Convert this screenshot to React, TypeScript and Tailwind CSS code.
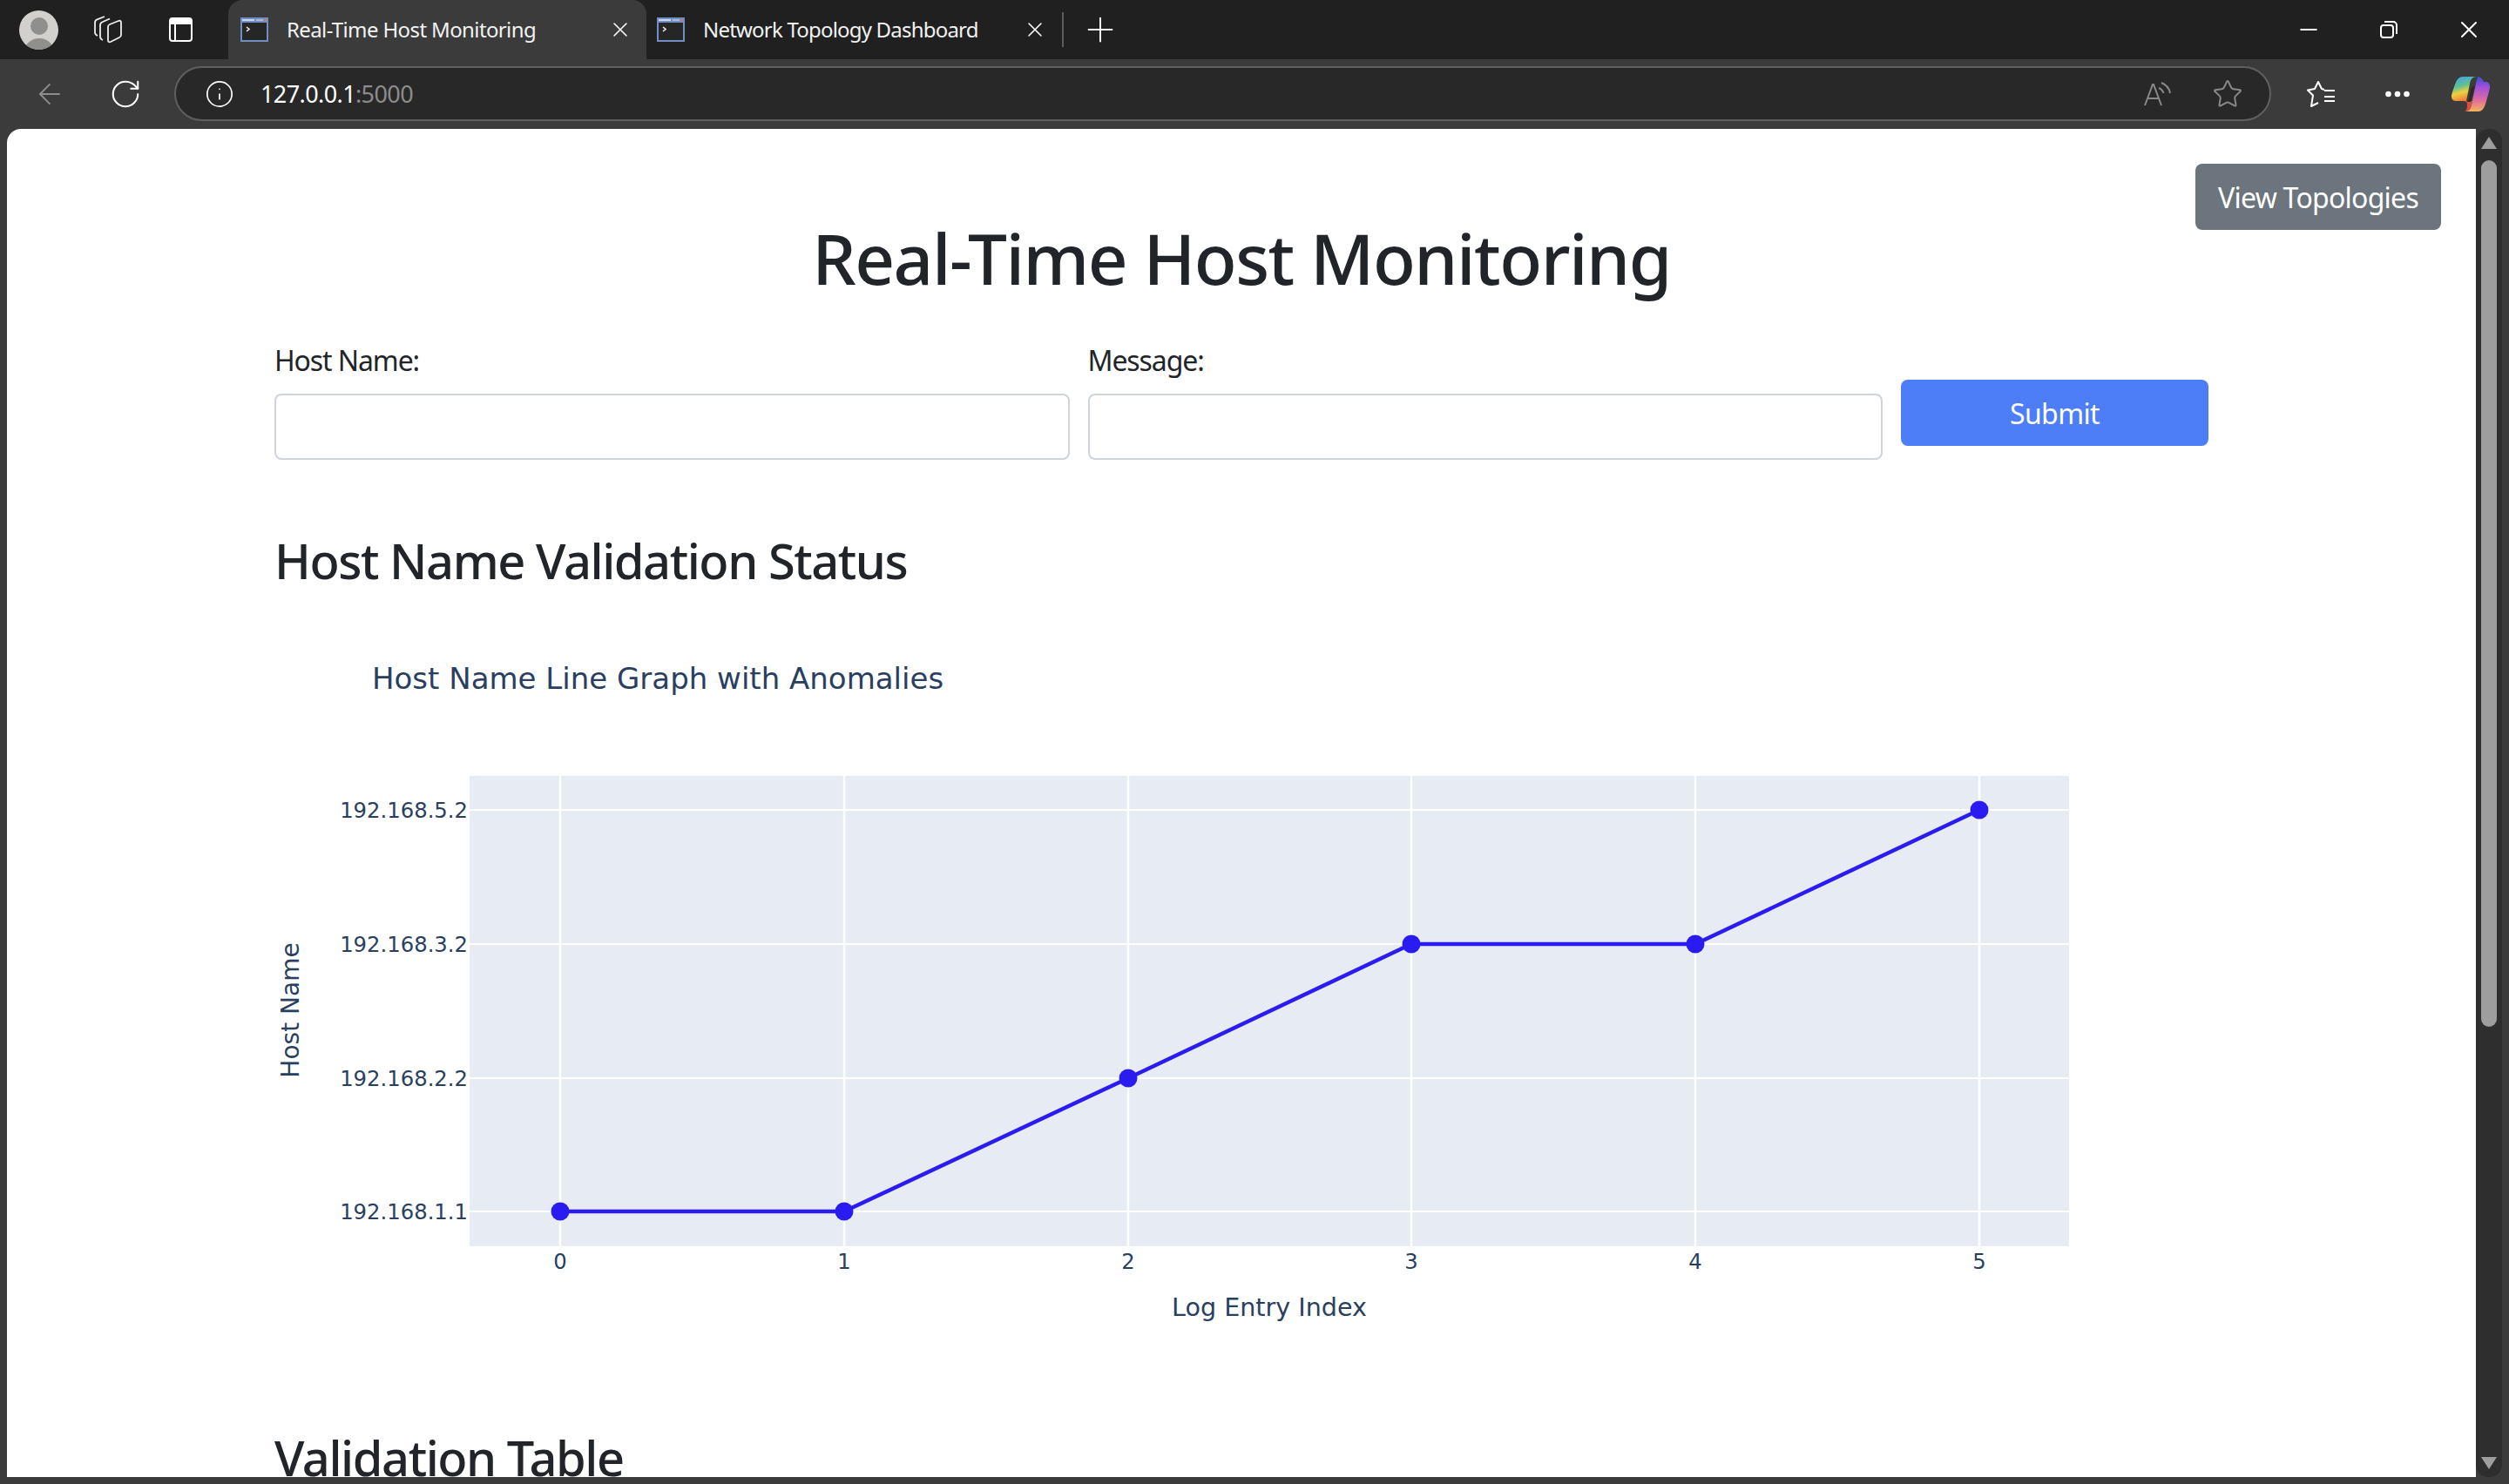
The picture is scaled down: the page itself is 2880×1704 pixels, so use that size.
import { ArrowLeft, Ellipsis, Info, Minus, Plus, RotateCw, Star, X } from "lucide-react";

const xTicks = [
  { label: "0", x: 643 },
  { label: "1", x: 969 },
  { label: "2", x: 1295 },
  { label: "3", x: 1620 },
  { label: "4", x: 1946 },
  { label: "5", x: 2272 },
];

const yTicks = [
  { label: "192.168.5.2", y: 930 },
  { label: "192.168.3.2", y: 1084 },
  { label: "192.168.2.2", y: 1238 },
  { label: "192.168.1.1", y: 1391 },
];

const points = [
  [643, 1391],
  [969, 1391],
  [1295, 1238],
  [1620, 1084],
  [1946, 1084],
  [2272, 930],
];

function Favicon() {
  return (
    <svg width="32" height="28" viewBox="0 0 32 28" className="shrink-0">
      <rect width="32" height="28" fill="#6f8fc4" />
      <rect x="2" y="2" width="14" height="2" fill="#c9d6ee" />
      <rect x="18" y="2" width="8" height="2" fill="#aebbd4" />
      <rect x="27" y="2" width="3" height="2" fill="#e2725b" />
      <rect x="2" y="6" width="28" height="20" fill="#262626" />
      <path d="M7 11l3 2.5-3 2.5" fill="none" stroke="#e8e8e8" strokeWidth="1.6" />
    </svg>
  );
}

function Tab({ title, active }: { title: string; active?: boolean }) {
  return (
    <div
      className={
        active
          ? "flex h-[68px] w-[480px] items-center rounded-t-[16px] bg-[#3b3b3b] pl-[14px] pr-[16px]"
          : "flex h-[68px] w-[477px] items-center pl-[12px] pr-[17px]"
      }
    >
      <Favicon />
      <span
        className={
          active
            ? "ml-[21px] flex-1 text-[24px] tracking-[-0.62px] text-[#f2f2f2]"
            : "ml-[21px] flex-1 text-[24px] tracking-[-0.8px] text-[#f2f2f2]"
        }
      >
        {title}
      </span>
      <X className="size-[28px] text-white" strokeWidth={1.3} />
    </div>
  );
}

function TabsIcon() {
  return (
    <svg width="32" height="32" viewBox="0 0 32 32" fill="none" stroke="#eee" strokeWidth="1.8" strokeLinejoin="round">
      <path d="M16 13c0-1.500.5-2.500 2-3l10-4c2-.7 3 0 3 2v14c0 1.500-.5 2.500-2 3l-10 5c-2 .8-3 0-3-2z" />
      <path d="M10 28c-2-.7-3-2-3-4V11c0-2 1-3 2.500-3.700L18 3.500" />
      <path d="M4 23c-2-1-3-2-3-3.500V8c0-2 1-3 2.500-3.700L12 1" />
    </svg>
  );
}

function ReadAloudIcon() {
  return (
    <svg width="32" height="30" viewBox="0 0 32 30" fill="none" stroke="#8a8a8a" strokeWidth="2">
      <path d="M1 28L10 4h1l9 24M4.500 20h12" />
      <path d="M17 8c3 1 4.500 3 5.500 6M20 2c5 2 9 6 10 12" />
    </svg>
  );
}

function FavoritesIcon() {
  return (
    <svg width="33" height="32" viewBox="0 0 33 32" fill="none" stroke="#fff" strokeWidth="2" strokeLinejoin="round">
      <path d="M20 11l-3-1-4-8-4 8-8 1.500 6 6-2 12.500 8-4" />
      <path d="M20 12h12M20 19h12M20 24h12" />
    </svg>
  );
}

function CopilotLogo() {
  return (
    <svg width="44" height="40" viewBox="0 0 44 40">
      <defs>
        <linearGradient id="copilotLeft" x1="0" y1="0" x2="0.3" y2="1">
          <stop offset="0" stopColor="#3f9bf2" />
          <stop offset="0.45" stopColor="#5fc28f" />
          <stop offset="0.7" stopColor="#ecd23f" />
          <stop offset="1" stopColor="#f0843c" />
        </linearGradient>
        <linearGradient id="copilotRight" x1="0.5" y1="0" x2="0.5" y2="1">
          <stop offset="0" stopColor="#3350d8" />
          <stop offset="0.3" stopColor="#a250d8" />
          <stop offset="0.7" stopColor="#e0709a" />
          <stop offset="1" stopColor="#f4b45a" />
        </linearGradient>
      </defs>
      <path d="M13 0h16c-5 0-7 3-8 8l-4 20H6C2 28 0 26 0 23 0 21 1 17 4 9 6 3 9 0 13 0z" fill="url(#copilotLeft)" />
      <path d="M31 40H15c5 0 7-3 8-8l5-24c1-4 2-8 2-8 3 0 6 3 7 6h2c3 0 5 2 5 5 0 3-1 7-4 17-2 8-5 12-9 12z" fill="url(#copilotRight)" />
      <path d="M17 28h-4c3 0 5 1 5 4 0 4-1 8-3 8 5 0 7-3 8-8l1-4z" fill="#d8503c" />
      <path d="M27 11l-5 18h-6c2 0 3-1 4-4l2-10c.5-2 2-4 5-4z" fill="#2a2a2a" />
    </svg>
  );
}

function TitleBar() {
  return (
    <div className="flex h-[68px] shrink-0 items-center bg-[#202020]">
      <div className="flex w-[262px] items-center pl-[22px]">
        <div className="relative size-[45px] overflow-hidden rounded-full bg-[#d1d0cc]">
          <div className="mx-auto mt-[8px] size-[20px] rounded-full bg-[#8f8f8d]" />
          <div className="mx-auto mt-[4px] h-[24px] w-[36px] rounded-t-full bg-[#8f8f8d]" />
        </div>
        <div className="ml-[41px]">
          <TabsIcon />
        </div>
        <div className="ml-[54px] h-[28px] w-[27px] rounded-[4px] border-2 border-white">
          <div className="h-[6px] bg-white" />
          <div className="h-[18px] w-[6px] border-r-2 border-white" />
        </div>
      </div>
      <Tab title="Real-Time Host Monitoring" active />
      <Tab title="Network Topology Dashboard" />
      <div className="h-[40px] w-[2px] bg-[#5c5c5c]" />
      <Plus className="ml-[19px] size-[46px] text-white" strokeWidth={1} />
      <div className="ml-auto flex items-center pr-[30px]">
        <Minus className="size-[30px] text-white" strokeWidth={1.6} />
        <svg width="20" height="20" viewBox="0 0 20 20" fill="none" stroke="#fff" strokeWidth="2" className="ml-[67px]">
          <rect x="1" y="5" width="14" height="14" rx="3" />
          <path d="M5 1h10a4 4 0 0 1 4 4v10" />
        </svg>
        <X className="ml-[66px] size-[32px] text-white" strokeWidth={1.5} />
      </div>
    </div>
  );
}

function Toolbar() {
  return (
    <div className="flex h-[80px] shrink-0 items-center bg-[#3b3b3b] pb-[1px]">
      <ArrowLeft className="ml-[38px] size-[38px] text-[#8d8d8d]" strokeWidth={1.2} />
      <RotateCw className="ml-[49px] size-[38px] text-white" strokeWidth={1.3} />
      <div className="ml-[37px] flex h-[63px] w-[2407px] items-center rounded-full border-2 border-[#5f5f5f] bg-[#282828] pl-[33px] pr-[30px]">
        <Info className="size-[34px] text-white" strokeWidth={1.2} />
        <span className="ml-[30px] pt-[2px] text-[27px] tracking-[-0.6px] text-white">
          127.0.0.1<span className="text-[#8c8c8c]">:5000</span>
        </span>
        <div className="ml-auto flex items-center gap-[46px]">
          <ReadAloudIcon />
          <Star className="size-[36px] text-[#8a8a8a]" strokeWidth={1.3} />
        </div>
      </div>
      <div className="ml-[41px]">
        <FavoritesIcon />
      </div>
      <Ellipsis className="ml-[53px] size-[36px] text-white" strokeWidth={2.4} />
      <div className="ml-[44px]">
        <CopilotLogo />
      </div>
    </div>
  );
}

function HostChart() {
  return (
    <svg viewBox="315 720 2220 860" width="2220" height="860" className="block">
      <rect x="539" y="891" width="1836" height="540" fill="#e7ebf4" />
      {xTicks.map((t) => (
        <line key={t.x} x1={t.x} x2={t.x} y1="891" y2="1431" stroke="#fff" strokeWidth="2.500" />
      ))}
      {yTicks.map((t) => (
        <line key={t.y} x1="539" x2="2375" y1={t.y} y2={t.y} stroke="#fff" strokeWidth="2" />
      ))}
      <polyline
        points={points.map((p) => p.join(",")).join(" ")}
        fill="none"
        stroke="#2a1cf0"
        strokeWidth="4.500"
      />
      {points.map(([x, y]) => (
        <circle key={x} cx={x} cy={y} r="10.500" fill="#2a1cf0" />
      ))}
      <g fontFamily="'DejaVu Sans', sans-serif" fill="#2a3f5f">
        <text x="427" y="791" fontSize="34">
          Host Name Line Graph with Anomalies
        </text>
        {yTicks.map((t) => (
          <text key={t.y} x="537" y={t.y + 9} fontSize="24.300" textAnchor="end">
            {t.label}
          </text>
        ))}
        {xTicks.map((t) => (
          <text key={t.x} x={t.x} y="1457" fontSize="24.300" textAnchor="middle">
            {t.label}
          </text>
        ))}
        <text x="1457" y="1511" fontSize="28.600" textAnchor="middle">
          Log Entry Index
        </text>
        <text x="0" y="0" fontSize="28" textAnchor="middle" transform="translate(343 1160) rotate(-90)">
          Host Name
        </text>
      </g>
    </svg>
  );
}

function Field({ label }: { label: string }) {
  return (
    <div className="flex-1">
      <label className="mb-[14px] block text-[32px] leading-[48px] tracking-[-1.1px] text-[#212529]">{label}</label>
      <input className="block h-[76px] w-full rounded-[8px] border-2 border-[#ced4da] bg-white" />
    </div>
  );
}

function Page() {
  return (
    <div className="relative min-w-0 flex-1 overflow-hidden rounded-tl-[16px] bg-white">
      <button className="absolute right-[40px] top-[40px] h-[76px] w-[282px] rounded-[8px] bg-[#6c757d] pt-[2px] text-[32px] tracking-[-0.75px] text-white">
        View Topologies
      </button>
      <div className="mx-auto w-[2220px] pt-[100px]">
        <h1 className="text-center text-[80px] font-[550] leading-[96px] tracking-[-1.5px] text-[#212529]">
          Real-Time Host Monitoring
        </h1>
        <form className="mt-[46px] flex items-start gap-[21px]">
          <Field label="Host Name:" />
          <Field label="Message:" />
          <button
            type="button"
            className="mt-[46px] h-[76px] w-[353px] rounded-[8px] bg-[#4d7ef7] pt-[2px] text-[32px] tracking-[-0.6px] text-white"
          >
            Submit
          </button>
        </form>
        <h3 className="mt-[82px] text-[56px] font-[550] leading-[67px] tracking-[-1.45px] text-[#212529]">
          Host Name Validation Status
        </h3>
        <div className="mt-[43px]">
          <HostChart />
        </div>
        <h3 className="mt-[60px] text-[56px] font-[550] leading-[67px] tracking-[-1.45px] text-[#212529]">
          Validation Table
        </h3>
      </div>
    </div>
  );
}

function Scrollbar() {
  return (
    <div className="flex w-[30px] shrink-0 flex-col items-center rounded-t-[14px] rounded-b-[14px] bg-[#2e2e2e] pb-[9px] pt-[9px]">
      <div className="h-0 w-0 border-x-[9px] border-b-[14px] border-x-transparent border-b-[#9e9e9e]" />
      <div className="mt-[13px] h-[995px] w-[18px] rounded-full bg-[#9e9e9e]" />
      <div className="mt-auto h-0 w-0 border-x-[9px] border-t-[14px] border-x-transparent border-t-[#9e9e9e]" />
    </div>
  );
}

export default function App() {
  return (
    <div className="flex h-[1704px] w-[2880px] flex-col overflow-hidden bg-[#3b3b3b] font-['Noto_Sans',sans-serif]">
      <TitleBar />
      <Toolbar />
      <div className="flex min-h-0 flex-1 pb-[8px] pl-[8px] pr-[8px]">
        <Page />
        <Scrollbar />
      </div>
    </div>
  );
}
